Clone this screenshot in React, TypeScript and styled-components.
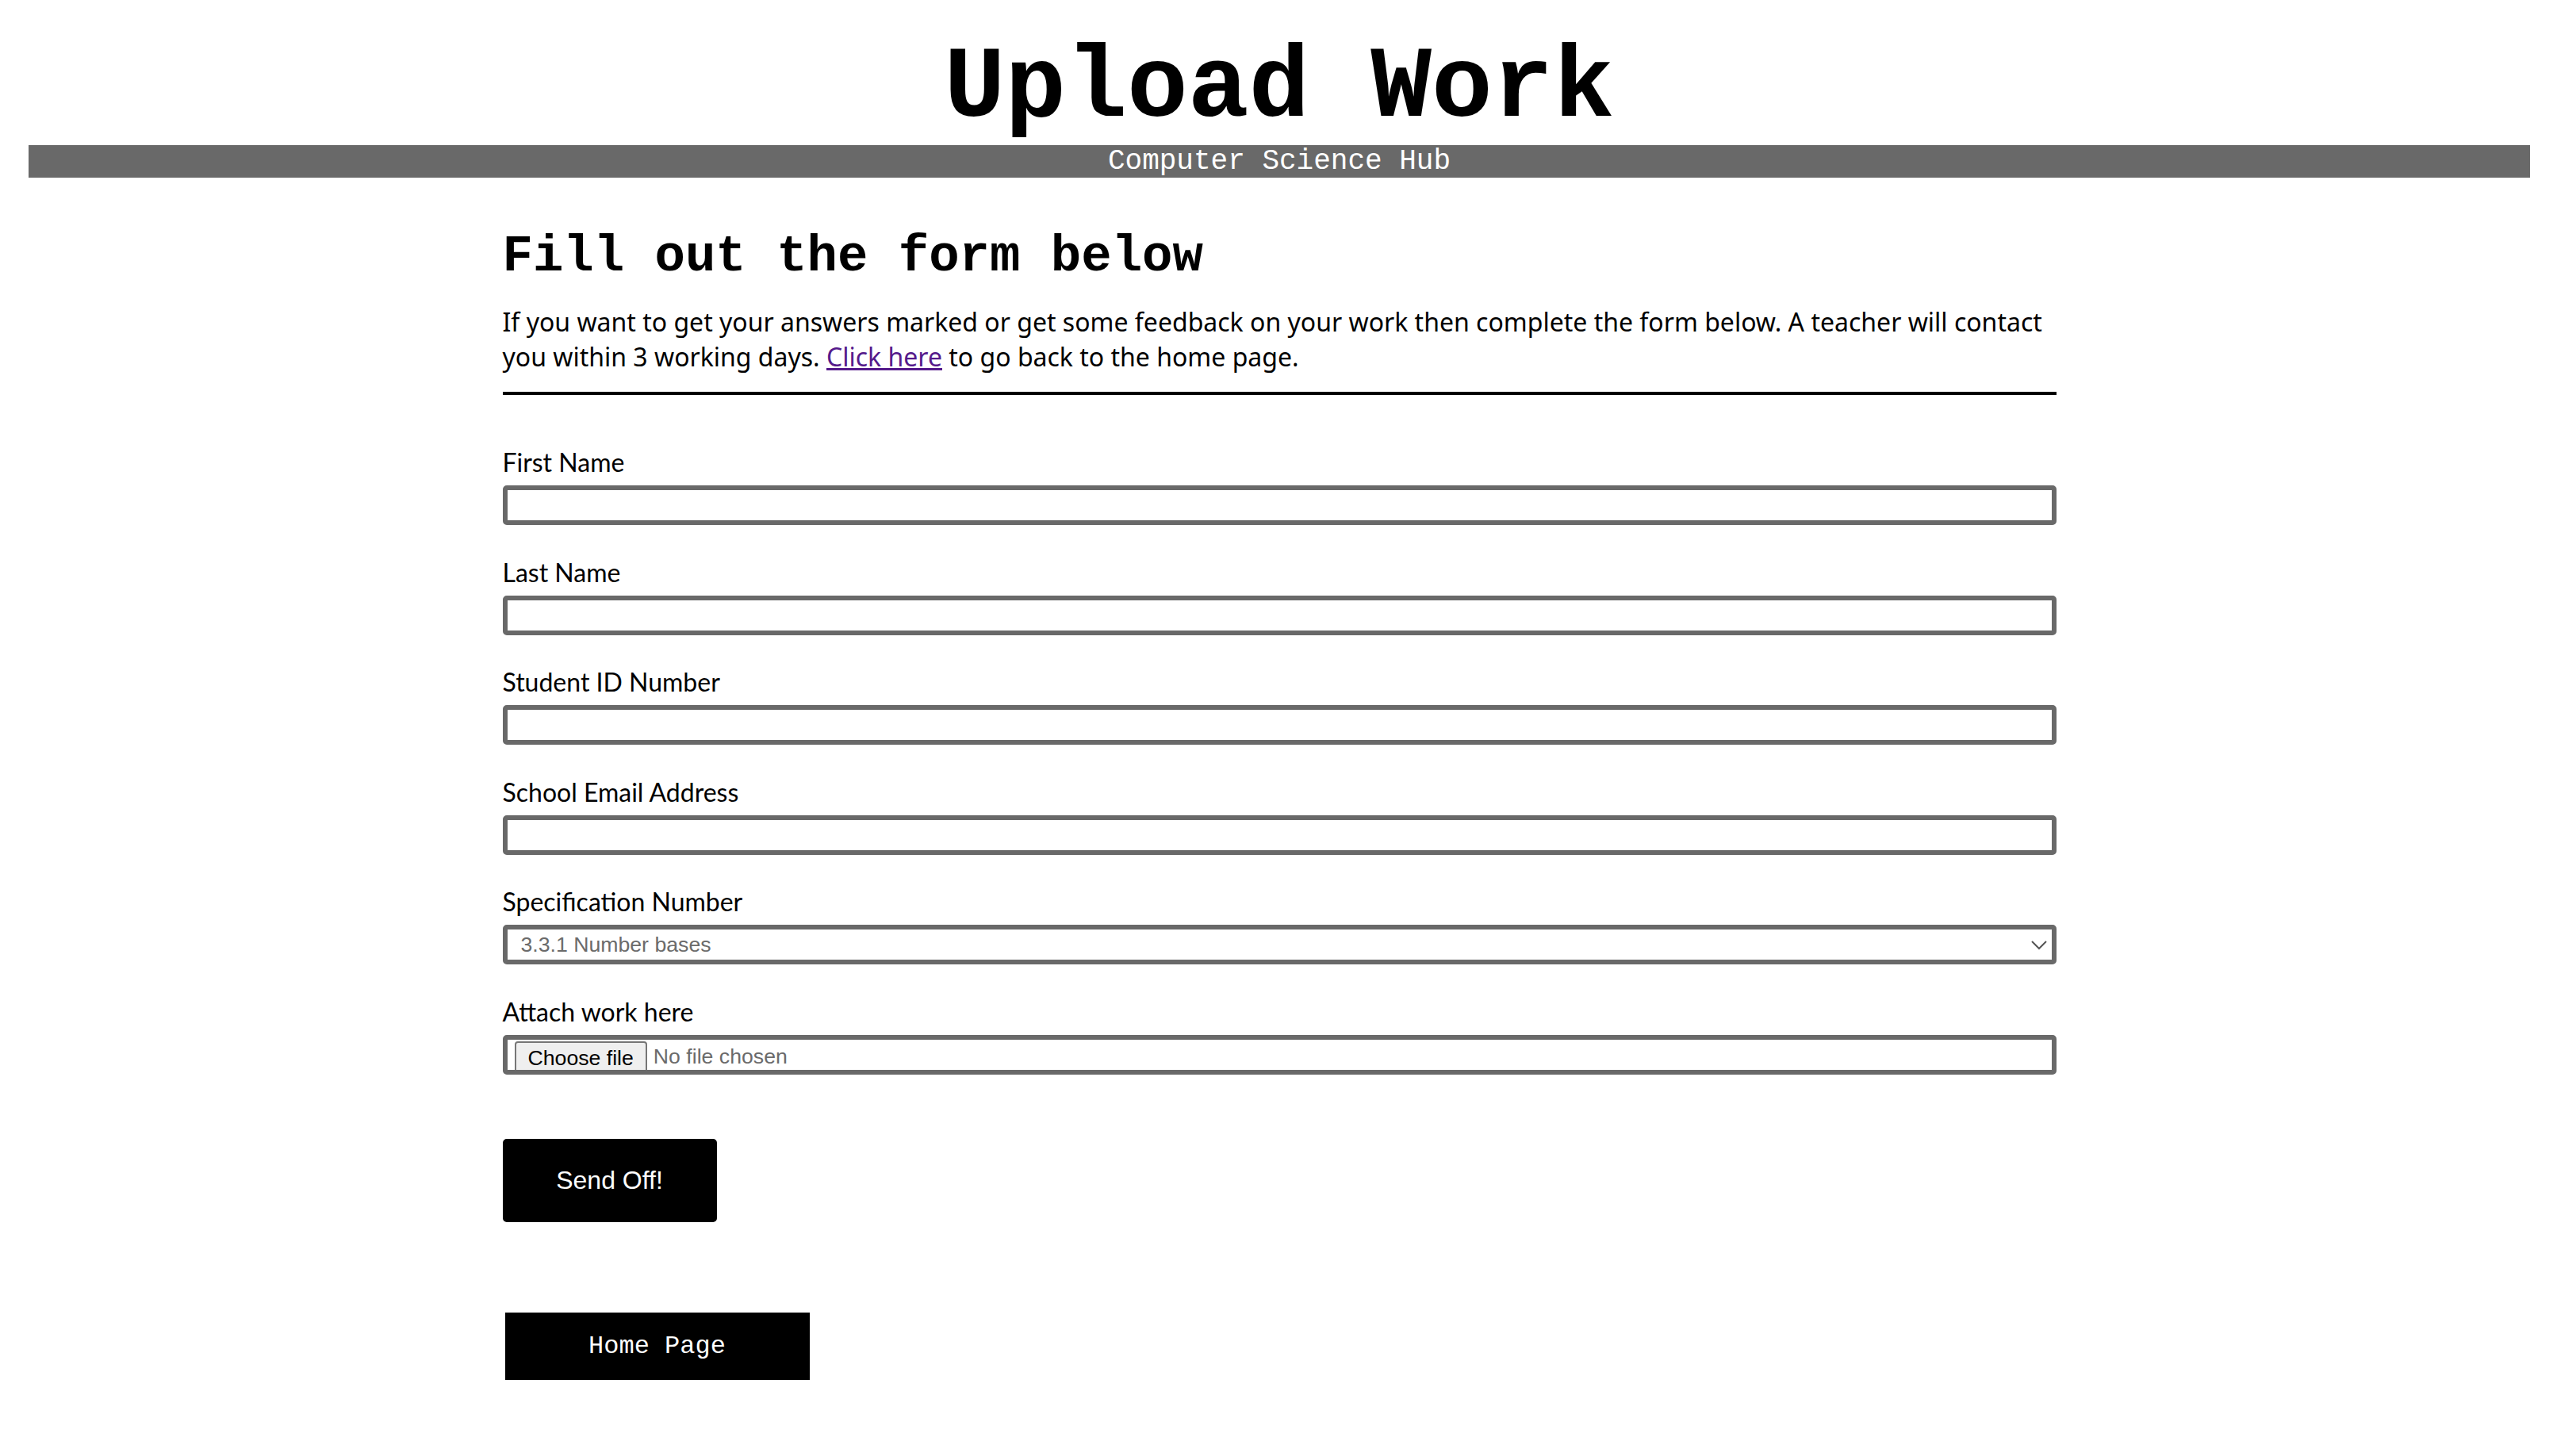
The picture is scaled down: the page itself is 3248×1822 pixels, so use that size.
import React from "react";
import styled, { createGlobalStyle } from "styled-components";

const GlobalStyle = createGlobalStyle`
  html, body {
    margin: 0;
    padding: 0;
    background: #ffffff;
  }
  * {
    box-sizing: border-box;
  }
`;

const Page = styled.div`
  padding: 40px 58px 80px 36px;
`;

const Title = styled.h1`
  margin: 0;
  font-family: "Liberation Mono", "Courier New", monospace;
  font-weight: 700;
  font-size: 128px;
  line-height: 143px;
  text-align: center;
  color: #000;
`;

const Banner = styled.div`
  background: #696969;
  color: #ffffff;
  font-family: "Liberation Mono", "Courier New", monospace;
  font-size: 36px;
  line-height: 41px;
  text-align: center;
`;

const Main = styled.main`
  width: 1959px;
  margin: 64px auto 0;
`;

const Heading = styled.h2`
  margin: 0;
  font-family: "Liberation Mono", "Courier New", monospace;
  font-weight: 700;
  font-size: 64px;
  line-height: 72px;
  color: #000;
`;

const Intro = styled.p`
  margin: 24px 0 0;
  font-family: "Noto Sans", "Open Sans", sans-serif;
  font-size: 32px;
  line-height: 44px;
  color: #000;
`;

const Link = styled.a`
  color: #551a8b;
  text-decoration: underline;
`;

const Rule = styled.hr`
  margin: 22px 0 0;
  height: 4px;
  border: none;
  background: #000;
`;

const Form = styled.form`
  display: flex;
  flex-direction: column;
  gap: 40.6px;
  margin-top: 66px;
`;

const Field = styled.div`
  display: flex;
  flex-direction: column;
  gap: 10px;
`;

const Label = styled.label`
  font-family: Lato, "Noto Sans", sans-serif;
  font-size: 32px;
  line-height: 38px;
  color: #000;
`;

const TextInput = styled.input`
  display: block;
  width: 100%;
  height: 50px;
  border: 6px solid #696969;
  border-radius: 5px;
  background: #fff;
  padding: 0 12px;
  font-family: "Liberation Sans", Arial, sans-serif;
  font-size: 26.67px;
  outline: none;
`;

const SelectWrap = styled.div`
  position: relative;
  width: 100%;
`;

const Select = styled.select`
  display: block;
  width: 100%;
  height: 50px;
  border: 6px solid #696969;
  border-radius: 5px;
  background: #fff;
  padding: 0 40px 0 17px;
  font-family: "Liberation Sans", Arial, sans-serif;
  font-size: 26.67px;
  color: #6b6b6b;
  appearance: none;
  -webkit-appearance: none;
  outline: none;
`;

const Chevron = styled.svg`
  position: absolute;
  right: 12px;
  top: 20px;
  width: 20px;
  height: 12px;
  pointer-events: none;
`;

const FileBox = styled.label`
  display: flex;
  align-items: flex-start;
  width: 100%;
  height: 50px;
  border: 6px solid #696969;
  border-radius: 5px;
  background: #fff;
  overflow: hidden;
  cursor: pointer;
`;

const HiddenFile = styled.input`
  display: none;
`;

const ChooseButton = styled.span`
  flex: none;
  margin: 2px 0 0 9px;
  height: 46px;
  padding: 4px 15px 0;
  border: 2px solid #767676;
  border-radius: 4px;
  background: #efefef;
  font-family: "Liberation Sans", Arial, sans-serif;
  font-size: 26.67px;
  line-height: 30px;
  color: #000;
`;

const NoFile = styled.span`
  margin: 6px 0 0 8px;
  font-family: "Liberation Sans", Arial, sans-serif;
  font-size: 26.67px;
  line-height: 30px;
  color: #6b6b6b;
`;

const Actions = styled.div`
  display: flex;
  flex-direction: column;
  align-items: flex-start;
  margin-top: 81px;
`;

const SendButton = styled.button`
  width: 270px;
  height: 105px;
  border: none;
  border-radius: 5px;
  background: #000;
  color: #fff;
  font-family: "Liberation Sans", Arial, sans-serif;
  font-size: 32px;
  cursor: pointer;
`;

const HomeButton = styled.a`
  display: flex;
  align-items: center;
  justify-content: center;
  width: 384px;
  height: 85px;
  margin: 114px 0 0 3px;
  background: #000;
  color: #fff;
  font-family: "Liberation Mono", "Courier New", monospace;
  font-size: 32px;
  text-decoration: none;
`;

const fields = ["First Name", "Last Name", "Student ID Number", "School Email Address"];

export default function App() {
  return (
    <>
      <GlobalStyle />
      <Page>
        <Title>Upload Work</Title>
        <Banner>Computer Science Hub</Banner>
        <Main>
          <Heading>Fill out the form below</Heading>
          <Intro>
            If you want to get your answers marked or get some feedback on your work then complete the form
            below. A teacher will contact you within 3 working days. <Link href="#">Click here</Link> to go
            back to the home page.
          </Intro>
          <Rule />
          <Form onSubmit={(e) => e.preventDefault()}>
            {fields.map((f) => (
              <Field key={f}>
                <Label>{f}</Label>
                <TextInput type="text" />
              </Field>
            ))}
            <Field>
              <Label>Specification Number</Label>
              <SelectWrap>
                <Select defaultValue="3.3.1">
                  <option value="3.3.1">3.3.1 Number bases</option>
                  <option value="3.3.2">3.3.2 Converting between number bases</option>
                  <option value="3.3.3">3.3.3 Units of information</option>
                </Select>
                <Chevron viewBox="0 0 20 12">
                  <path d="M1 1 L10 10 L19 1" fill="none" stroke="#555" strokeWidth="2" />
                </Chevron>
              </SelectWrap>
            </Field>
            <Field>
              <Label>Attach work here</Label>
              <FileBox>
                <HiddenFile type="file" />
                <ChooseButton>Choose file</ChooseButton>
                <NoFile>No file chosen</NoFile>
              </FileBox>
            </Field>
          </Form>
          <Actions>
            <SendButton type="button">Send Off!</SendButton>
            <HomeButton href="#">Home Page</HomeButton>
          </Actions>
        </Main>
      </Page>
    </>
  );
}
